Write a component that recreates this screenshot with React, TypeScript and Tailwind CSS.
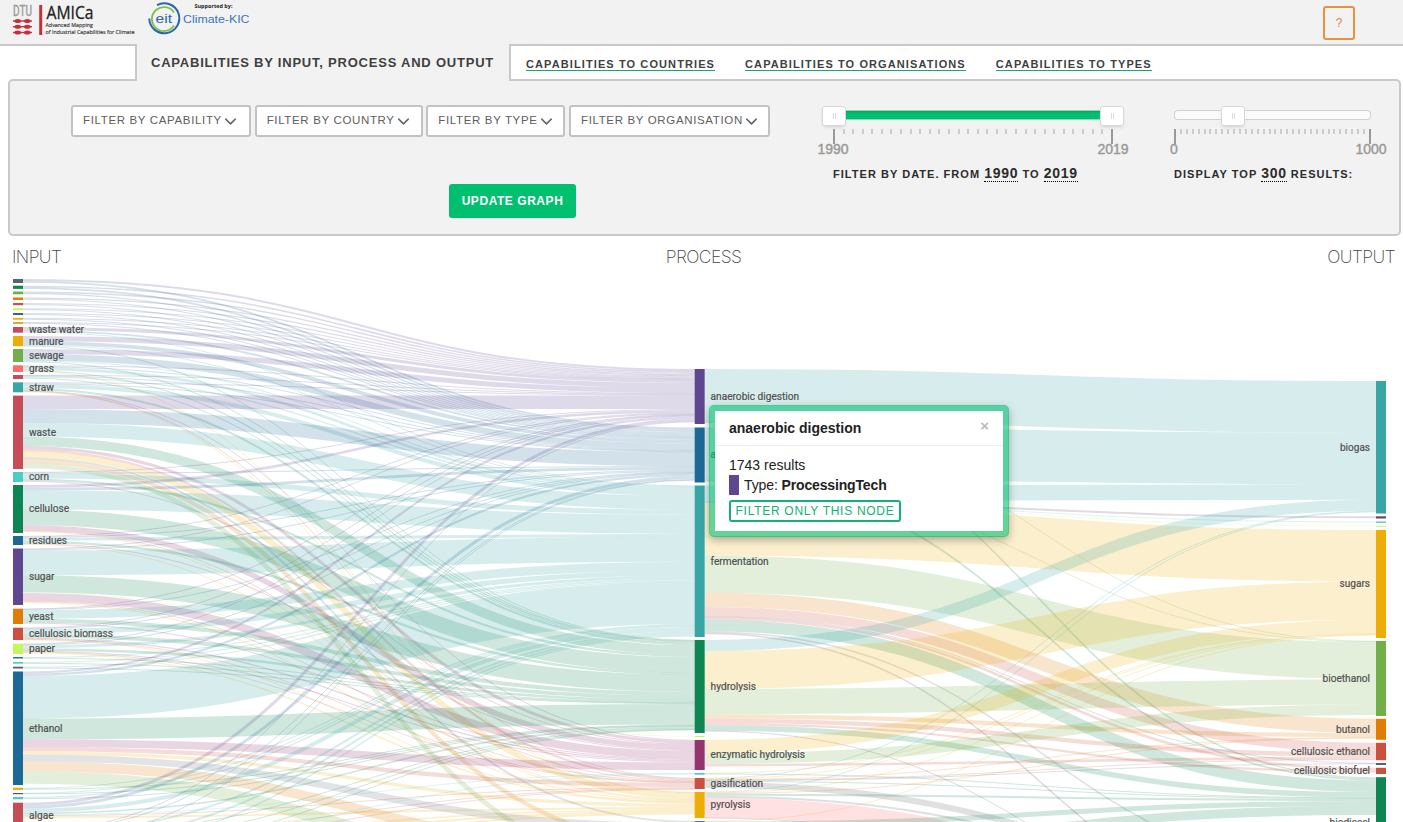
import React from 'react';
import { ChevronDown } from 'lucide-react';

type Node = { y: number; h: number; color: string; label?: string };
type Source = Node & { flows: number[] };

const PURPLE = '#5F4690';
const BLUE = '#1D6996';
const TEAL = '#38A6A5';
const GREEN = '#0F8554';
const LEAF = '#73AF48';
const YELLOW = '#EDAD08';
const ORANGE = '#E17C05';
const RED = '#CC503E';
const MAGENTA = '#94346E';
const SLATE = '#556270';
const AQUA = '#4ECDC4';
const LIME = '#C7F464';
const CORAL = '#FF6B6B';
const ROSE = '#C44D58';
const GRAY = '#666666';

const processes: Node[] = [
  { y: 369, h: 55, color: PURPLE, label: 'anaerobic digestion' },
  { y: 427.5, h: 55, color: BLUE, label: 'anaerobic' },
  { y: 485.5, h: 151.5, color: TEAL, label: 'fermentation' },
  { y: 640, h: 93, color: GREEN, label: 'hydrolysis' },
  { y: 736, h: 1, color: LIME },
  { y: 740, h: 30, color: MAGENTA, label: 'enzymatic hydrolysis' },
  { y: 773, h: 1.7, color: AQUA },
  { y: 778, h: 11, color: RED, label: 'gasification' },
  { y: 792, h: 26, color: YELLOW, label: 'pyrolysis' },
  { y: 821, h: 18, color: '#6b7280' },
  { y: 843, h: 22, color: ORANGE },
  { y: 872, h: 30, color: LEAF },
];

// Flow widths follow the order of the process nodes.
const inputs: Source[] = [
  { y: 279, h: 4, color: SLATE, flows: [2, 1.8] },
  { y: 285.7, h: 3.2, color: GREEN, flows: [1.6, 1.6] },
  { y: 291.5, h: 2.8, color: LEAF, flows: [1.4, 1.3] },
  { y: 297.5, h: 2.5, color: ORANGE, flows: [1.2, 1.1] },
  { y: 303, h: 2.2, color: RED, flows: [1.1, 1] },
  { y: 308.2, h: 2, color: LIME, flows: [1, 1] },
  { y: 313, h: 2, color: '#2c6a86', flows: [1, 1] },
  { y: 317.9, h: 1.8, color: YELLOW, flows: [0.9, 0.9] },
  { y: 322.1, h: 1.8, color: '#E39A2D', flows: [0.8, 0.8] },
  { y: 327, h: 5.7, color: ROSE, label: 'waste water', flows: [3, 1.8, 0.8] },
  { y: 336, h: 10.2, color: YELLOW, label: 'manure', flows: [5, 3.8, 0.8, 0.6] },
  { y: 349, h: 13, color: LEAF, label: 'sewage', flows: [5, 6.4, 0.9, 0.7] },
  { y: 365.3, h: 6.7, color: CORAL, label: 'grass', flows: [1, 0.8, 2.8, 1.2, 0, 0, 0, 0, 0.7] },
  { y: 375, h: 4, color: ROSE, flows: [0.6, 0.6, 1.4, 0.9] },
  { y: 382.3, h: 10, color: TEAL, label: 'straw', flows: [1, 0.8, 4, 2, 0, 1, 0, 0.4, 0.4] },
  { y: 395.6, h: 73.4, color: ROSE, label: 'waste', flows: [13.5, 14, 13.5, 9.5, 0, 3, 0, 2.2, 6, 2, 4.2, 4.8] },
  { y: 472, h: 10, color: AQUA, label: 'corn', flows: [0.8, 0.8, 5, 2.2, 0, 0.8] },
  { y: 485, h: 48, color: GREEN, label: 'cellulose', flows: [2.7, 2.7, 19, 15.5, 0, 5.5, 0, 0.6, 1] },
  { y: 536, h: 9, color: BLUE, label: 'residues', flows: [0.8, 1, 3, 2.3, 0, 0.8, 0, 0, 0.6] },
  { y: 548.5, h: 56.5, color: PURPLE, label: 'sugar', flows: [0.8, 1, 25, 17, 0.7, 8, 0, 0.8, 1.2] },
  { y: 608.7, h: 15.3, color: ORANGE, label: 'yeast', flows: [0.6, 0.6, 8.8, 4, 0, 0.8] },
  { y: 627.7, h: 12.3, color: RED, label: 'cellulosic biomass', flows: [0.7, 0.7, 5, 3.6, 0, 1.4, 0, 0.4, 0.5] },
  { y: 643.7, h: 10.3, color: '#c3f75c', label: 'paper', flows: [0.7, 0.8, 3, 2.5, 0, 1, 0, 0.5, 1.4] },
  { y: 657, h: 1.5, color: '#2c7a70', flows: [0, 0, 0.9, 0.6] },
  { y: 662, h: 1.7, color: AQUA, flows: [0, 0, 1, 0.7] },
  { y: 666.7, h: 1.8, color: SLATE, flows: [0, 0, 1.1, 0.6] },
  { y: 671.5, h: 113.5, color: BLUE, label: 'ethanol', flows: [2.2, 2.3, 42.5, 20.7, 0, 7.8, 0, 4.2, 3.2, 7, 9.8, 12.5] },
  { y: 787.7, h: 2.2, color: YELLOW, flows: [0, 0, 1.2, 0.8] },
  { y: 793, h: 1.2, color: PURPLE, flows: [0, 0, 0.7, 0.4] },
  { y: 797, h: 2.3, color: AQUA, flows: [0, 0, 1.3, 0.8] },
  { y: 802.7, h: 25, color: ROSE, label: 'algae', flows: [3, 3, 4, 1.6, 0, 0, 0.8, 1, 2] },
  { y: 831, h: 8, color: GREEN, flows: [0.8, 0.8, 2, 0.8, 0, 0, 0, 0.8, 1.5] },
  { y: 842, h: 8, color: RED, flows: [0, 0.5, 2, 0.6, 0, 0, 0.5, 0.7, 2] },
  { y: 853, h: 8, color: LEAF, flows: [0, 0, 1.4, 0.5, 0, 0, 0, 0, 2] },
];

const outputs: Node[] = [
  { y: 381, h: 132.5, color: TEAL, label: 'biogas' },
  { y: 516.3, h: 2.2, color: '#6F4070' },
  { y: 521.5, h: 1.4, color: AQUA },
  { y: 525.8, h: 1, color: LIME },
  { y: 530, h: 108, color: YELLOW, label: 'sugars' },
  { y: 641, h: 75, color: LEAF, label: 'bioethanol' },
  { y: 718.8, h: 21, color: ORANGE, label: 'butanol' },
  { y: 742.8, h: 17.4, color: RED, label: 'cellulosic ethanol' },
  { y: 763, h: 2, color: SLATE },
  { y: 767.8, h: 6.2, color: RED, label: 'cellulosic biofuel' },
  { y: 777.2, h: 90, color: GREEN, label: 'biodiesel' },
  { y: 872, h: 20, color: GRAY },
  { y: 895, h: 30, color: CORAL },
  { y: 930, h: 8, color: '#6F4070' },
];

// Flow widths leaving each process, in the order of the output nodes.
const processFlows: number[][] = [
  [51.8, 0, 0, 0, 0, 0.6, 0, 0, 0, 0, 1.6],
  [51.6, 0, 0, 0, 0, 0.6, 0, 0, 0, 0, 1.8],
  [15.4, 1.9, 0.8, 0.6, 51.5, 37, 14.3, 9.5, 0.6, 2.6, 11.5, 1.5, 0, 1.5],
  [11, 0, 0, 0, 38, 25.4, 4.2, 4.4, 0, 2.2, 5.5, 0, 0, 0.5],
  [],
  [0, 0, 0, 0, 13.3, 10.5, 0, 2.6],
  [0, 0, 0, 0, 0.7, 0, 0, 0, 0, 0, 0.5],
  [0.7, 0, 0, 0, 0.6, 0, 0.5, 0.6, 0.5, 0, 1, 6],
  [0.6, 0, 0, 0, 0.6, 0, 0.5, 0, 0, 0, 2, 2, 20, 0.6],
  [0, 0, 0, 0, 0.6, 0, 0, 0, 0, 0, 5, 5],
  [0, 0, 0, 0, 0, 0, 0, 0, 0, 0, 9, 5],
];

function buildLinks(sources: Node[], flows: number[][], targets: Node[], x0: number, x1: number) {
  const targetOffset = targets.map(() => 0);
  const mid = (x0 + x1) / 2;
  return sources.flatMap((source, i) => {
    let offset = 0;
    return (flows[i] ?? []).flatMap((width, j) => {
      if (!width) return [];
      const ya = source.y + offset + width / 2;
      const yb = targets[j].y + targetOffset[j] + width / 2;
      offset += width;
      targetOffset[j] += width;
      return [{ d: `M${x0},${ya}C${mid},${ya} ${mid},${yb} ${x1},${yb}`, width: Math.max(1, width), color: targets[j].color }];
    });
  });
}

const links = [
  ...buildLinks(inputs, inputs.map((n) => n.flows), processes, 23, 695),
  ...buildLinks(processes, processFlows, outputs, 705, 1376),
];

const labelWidths: Record<string, number> = {
  'waste water': 55, manure: 34.5, sewage: 34.5, grass: 25, straw: 25, waste: 27, corn: 20, cellulose: 40,
  residues: 38, sugar: 25.5, yeast: 24.5, 'cellulosic biomass': 84, paper: 26, ethanol: 33.5, algae: 24.5,
  'anaerobic digestion': 88.5, anaerobic: 45, fermentation: 58, hydrolysis: 45.5, 'enzymatic hydrolysis': 94.5,
  gasification: 52.5, pyrolysis: 40, biogas: 30, sugars: 30.5, bioethanol: 47.5, butanol: 34,
  'cellulosic ethanol': 79, 'cellulosic biofuel': 76, biodiesel: 40.5,
};

function Column({ nodes, x, labelX, anchor }: { nodes: Node[]; x: number; labelX: number; anchor: 'start' | 'end' }) {
  return (
    <g>
      {nodes.map((n, i) => (
        <g key={i}>
          <rect x={x} y={n.y} width={10} height={n.h} fill={n.color} />
          {n.label && (
            <text
              x={labelX}
              y={n.y + n.h / 2 + 3.4}
              textAnchor={anchor}
              textLength={labelWidths[n.label]}
              lengthAdjust="spacingAndGlyphs"
              strokeWidth={0.2}
              className="fill-[#505050] stroke-[#505050] text-[11px]"
            >
              {n.label}
            </text>
          )}
        </g>
      ))}
    </g>
  );
}

function Sankey() {
  return (
    <svg viewBox="0 270 1403 552" className="block h-[552px] w-[1403px] overflow-hidden font-[Roboto,sans-serif]">
      <g fill="none" strokeOpacity={0.2}>
        {links.map((l, i) => (
          <path key={i} d={l.d} stroke={l.color} strokeWidth={l.width} />
        ))}
      </g>
      <Column nodes={inputs} x={13} labelX={29} anchor="start" />
      <Column nodes={processes} x={694.7} labelX={710.6} anchor="start" />
      <Column nodes={outputs} x={1376} labelX={1370} anchor="end" />
    </svg>
  );
}

function Logos() {
  return (
    <svg viewBox="0 0 260 44" className="block h-[44px] w-[260px]">
      <text x="13" y="16" textLength="19" lengthAdjust="spacingAndGlyphs" fill="#999" stroke="#999" strokeWidth="0.4" className="font-[Roboto,sans-serif] text-[14.5px]">DTU</text>
      <g fill="#c5303c">
        {[21, 26.7, 32.5].map((y) => (
          <g key={y}>
            <rect x="13" y={y - 0.7} width="19" height="1.4" />
            <ellipse cx="17.7" cy={y} rx="3.3" ry="2" />
            <ellipse cx="27.3" cy={y} rx="3.3" ry="2" />
          </g>
        ))}
        <rect x="39.2" y="5" width="3" height="30" />
      </g>
      <g className="font-[Open_Sans,sans-serif]">
        <text x="46.5" y="19" textLength="47" lengthAdjust="spacingAndGlyphs" fill="#222" stroke="#222" strokeWidth="0.3" className="text-[18px]">AMICa</text>
        <text x="45.5" y="27" textLength="47.5" lengthAdjust="spacingAndGlyphs" fill="#333" stroke="#333" strokeWidth="0.15" className="text-[6px]">Advanced Mapping</text>
        <text x="45.5" y="34" textLength="89" lengthAdjust="spacingAndGlyphs" fill="#333" stroke="#333" strokeWidth="0.15" className="text-[6px]">of Industrial Capabilities for Climate</text>
      </g>
      <g fill="none" strokeLinecap="butt">
        <path d="M157 5.2A15 15 0 1 1 149.3 18.5" stroke="#2a67ad" strokeWidth="2" />
        <path d="M174 12.6A12 12 0 1 0 174 25.6" stroke="#7cc04b" strokeWidth="1.8" />
      </g>
      <text x="155.5" y="23.3" textLength="16.5" lengthAdjust="spacingAndGlyphs" fill="#2a67ad" className="font-[Liberation_Sans,sans-serif] text-[13.5px]">eit</text>
      <text x="194.5" y="7.7" textLength="38" lengthAdjust="spacingAndGlyphs" fill="#222" className="font-[Open_Sans,sans-serif] text-[6px] font-bold">Supported by:</text>
      <text x="183" y="23" textLength="66.5" lengthAdjust="spacingAndGlyphs" fill="#3f74ba" className="font-[Liberation_Sans,sans-serif] text-[10px]">Climate-KIC</text>
    </svg>
  );
}

function Handle() {
  return (
    <div className="flex h-5 w-6 shrink-0 items-center justify-center gap-[1px] rounded-[3px] border border-[#d9d9d9] bg-white shadow-[0_2px_4px_-2px_#bbb]">
      <span className="h-[6px] w-px bg-[#dcdcdc]" />
      <span className="h-[6px] w-px bg-[#dcdcdc]" />
    </div>
  );
}

function Scale({ minor, from, to }: { minor: number; from: string; to: string }) {
  return (
    <div>
      <div className="flex h-[15px] justify-between">
        <span className="h-[15px] w-[2px] bg-[#999]" />
        {Array.from({ length: minor }, (_, i) => (
          <span key={i} className="h-[5px] w-[2px] bg-[#ccc]" />
        ))}
        <span className="h-[15px] w-[2px] bg-[#999]" />
      </div>
      <div className="flex justify-between text-[14px] leading-[11px] text-[#999] [-webkit-text-stroke:0.4px_#999]">
        <span className="flex w-0 justify-center">{from}</span>
        <span className="flex w-0 justify-center">{to}</span>
      </div>
    </div>
  );
}

const filters = [
  { label: 'FILTER BY CAPABILITY', size: 'w-[180px]' },
  { label: 'FILTER BY COUNTRY', size: 'w-[168px]' },
  { label: 'FILTER BY TYPE', size: 'w-[139px]' },
  { label: 'FILTER BY ORGANISATION', size: 'w-[201px]' },
];

function Value({ children }: { children: React.ReactNode }) {
  return <span className="border-b border-dotted border-black text-[14px] leading-[14px] tracking-[0.75px]">{children}</span>;
}

function FilterPanel() {
  return (
    <section className="ml-2 flex h-[157px] w-[1393px] rounded-[5px] border-2 border-[#c9c9c9] bg-[#f2f2f2]">
      <div className="ml-[61px] mt-6 flex w-[751px] flex-col">
        <div className="flex w-[699px] justify-between">
          {filters.map((f) => (
            <button key={f.label} className={`${f.size} flex h-8 items-center whitespace-nowrap rounded-[3px] border-2 border-[#c2c2c2] bg-white pl-[10px] text-[11.5px] tracking-[0.65px] text-[#606060]`}>
              {f.label}
              <ChevronDown className="-ml-px size-[19px] shrink-0" strokeWidth={1.8} />
            </button>
          ))}
        </div>
        <button className="ml-[378px] mt-[47px] h-[34px] w-[127px] whitespace-nowrap rounded-[3px] bg-[#00c070] text-[12px] font-bold tracking-[0.55px] text-white">
          UPDATE GRAPH
        </button>
      </div>
      <div className="mt-[25px] w-[302px]">
        <div className="flex h-[23px] items-start">
          <Handle />
          <div className="mt-1 h-[10px] flex-1 border-y border-[#8fdcbb] bg-[#00c070] shadow-[inset_0_2px_2px_-1px_#0a9a60]" />
          <Handle />
        </div>
        <div className="ml-[11px] w-[280px]"><Scale minor={28} from="1990" to="2019" /></div>
        <p className="ml-[11px] mt-[9px] whitespace-nowrap text-[11px] font-bold leading-5 tracking-[1.03px] text-[#2b2b2b]">
          FILTER BY DATE. FROM <Value>1990</Value> TO <Value>2019</Value>
        </p>
      </div>
      <div className="ml-[50px] mt-[25px] w-[197px]">
        <div className="flex h-[23px] items-start">
          <div className="mt-1 h-[10px] w-[47px] rounded-l-[4px] border border-r-0 border-[#d2d2d2] bg-[#fafafa]" />
          <Handle />
          <div className="mt-1 h-[10px] flex-1 rounded-r-[4px] border border-l-0 border-[#d2d2d2] bg-[#fafafa]" />
        </div>
        <Scale minor={32} from="0" to="1000" />
        <p className="mt-[9px] whitespace-nowrap text-[11px] font-bold leading-5 tracking-[1.03px] text-[#2b2b2b]">
          DISPLAY TOP <Value>300</Value> RESULTS:
        </p>
      </div>
    </section>
  );
}

function NodePopup() {
  return (
    <div className="absolute left-[709px] top-[135px] h-[132px] w-[300px] rounded-[5px] border-[6px] border-[#00c070]/60 bg-white bg-clip-padding text-[14px] text-[#222] shadow-[0_3px_8px_rgba(0,0,0,0.3)]">
      <div className="flex h-[35px] items-center justify-between border-b border-[#eee] pl-[14px] pr-[14px]">
        <h3 className="font-bold">anaerobic digestion</h3>
        <span className="-mt-1 text-[15px] font-bold text-[#bbb]">×</span>
      </div>
      <div className="px-[14px] pt-[9px] leading-5">
        <p>1743 results</p>
        <p className="flex items-center">
          <span className="mr-[5px] h-5 w-[10px] bg-[#5f4690]" />
          <span className="tracking-[-0.1px]">Type:&nbsp;<b className="tracking-[-0.15px]">ProcessingTech</b></span>
        </p>
        <button className="mt-[5px] block h-[22px] w-[172px] whitespace-nowrap rounded-[3px] border-2 border-[#12b274] text-[12px] leading-[18px] tracking-[0.72px] text-[#12b274]">
          FILTER ONLY THIS NODE
        </button>
      </div>
    </div>
  );
}

export default function App() {
  return (
    <div className="h-[822px] w-[1403px] overflow-hidden bg-white font-[Liberation_Sans,Arial,sans-serif]">
      <header className="flex h-[44px] items-start justify-between bg-[#f2f2f2] pr-12">
        <Logos />
        <button className="mt-[6px] h-[34px] w-8 rounded-[3px] border-2 border-[#e8923c] text-[12px] text-[#e8824c]">?</button>
      </header>
      <nav className="flex h-[35px] bg-[#f2f2f2]">
        <div className="relative h-[37px] w-[137px] border-r-2 border-t-2 border-[#c9c9c9]">
          <div className="h-[33px] bg-white" />
        </div>
        <div className="relative h-[37px] w-[372px] whitespace-nowrap bg-[#f2f2f2] pl-[14px] text-[13px] font-bold leading-[37px] tracking-[0.78px] text-[#3f3f3f]">
          CAPABILITIES BY INPUT, PROCESS AND OUTPUT
        </div>
        <div className="flex flex-1 gap-[30px] border-l-2 border-t-2 border-[#c9c9c9] bg-white pl-[15px] pt-[11px] text-[11px] font-bold leading-[14px] tracking-[1.1px] text-[#3f3f3f]">
          <a className="h-[14px] whitespace-nowrap border-b border-[#12a870]">CAPABILITIES TO COUNTRIES</a>
          <a className="h-[14px] whitespace-nowrap border-b border-[#12a870]">CAPABILITIES TO ORGANISATIONS</a>
          <a className="h-[14px] whitespace-nowrap border-b border-[#12a870]">CAPABILITIES TO TYPES</a>
        </div>
      </nav>
      <FilterPanel />
      <div className="grid h-[34px] grid-cols-3 pl-3 pr-2 pt-[9px] font-[Inter,sans-serif] text-[17.5px] font-extralight leading-6 tracking-[-0.6px] text-[#444]">
        <h2>INPUT</h2>
        <h2 className="text-center">PROCESS</h2>
        <h2 className="text-right">OUTPUT</h2>
      </div>
      <main className="relative">
        <Sankey />
        <NodePopup />
      </main>
    </div>
  );
}
